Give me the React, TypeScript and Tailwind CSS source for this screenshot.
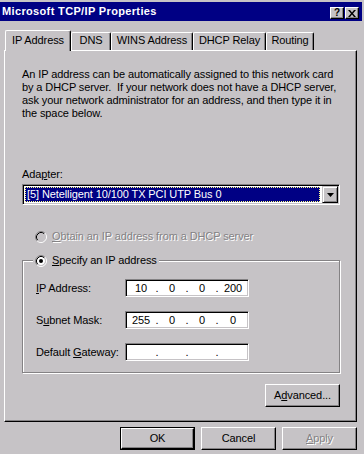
import React, { Fragment } from 'react';

function Radio({ checked, disabled }: { checked?: boolean; disabled?: boolean }) {
  return (
    <svg width="12" height="12" viewBox="0 0 12 12" className="shrink-0">
      <circle cx="6" cy="6" r="4" fill={disabled ? '#c6c3c6' : '#ffffff'} />
      <path d="M2.11 9.89A5.5 5.5 0 0 1 9.89 2.11" stroke="#848284" fill="none" />
      <path d="M9.89 2.11A5.5 5.5 0 0 1 2.11 9.89" stroke="#ffffff" fill="none" />
      <path d="M2.82 9.18A4.5 4.5 0 0 1 9.18 2.82" stroke="#000000" fill="none" />
      <path d="M9.18 2.82A4.5 4.5 0 0 1 2.82 9.18" stroke="#c6c3c6" fill="none" />
      {checked && <circle cx="6" cy="6" r="2" fill="#000000" />}
    </svg>
  );
}

function Btn({ children, isDefault }: { children: React.ReactNode; isDefault?: boolean }) {
  const inner = (
    <div className="w-full h-full flex items-center justify-center border border-t-white border-l-white border-r-black border-b-black shadow-[inset_-1px_-1px_0_#848284]">
      {children}
    </div>
  );
  return (
    <div className={isDefault ? 'w-[75px] h-[23px] border border-black' : 'w-[75px] h-[23px]'}>{inner}</div>
  );
}

function IpField({ parts }: { parts: string[] }) {
  const widths = ['w-[28px]', 'w-[26px]', 'w-[26px]', 'w-[28px]'];
  return (
    <div className="w-[124px] h-[18px] bg-white border border-t-[#848284] border-l-[#848284] border-r-white border-b-white shadow-[inset_1px_1px_0_#000,inset_-1px_-1px_0_#c6c3c6] flex items-center pl-[1px]">
      {parts.map((p, i) => (
        <Fragment key={i}>
          {i > 0 && <span className="w-[4px] text-center">.</span>}
          <span className={`${widths[i]} text-center`}>{p}</span>
        </Fragment>
      ))}
    </div>
  );
}

function Tab({ label, w, selected }: { label: string; w: string; selected?: boolean }) {
  return (
    <div
      className={`${w} ${
        selected ? 'h-[21px] -mb-px relative z-10 pt-[3px]' : 'h-[18px] pt-[1px]'
      } bg-[#c6c3c6] border-l border-t border-r border-l-white border-t-white border-r-black rounded-tl-[2px] rounded-tr-[2px] shadow-[inset_-1px_0_0_#848284] flex justify-center`}
    >
      <span className="leading-[13px]">{label}</span>
    </div>
  );
}

export default function App() {
  const disabledText = 'text-[#848284] [text-shadow:1px_1px_0_#ffffff]';
  return (
    <div className="w-[364px] h-[454px] bg-[#c6c3c6] overflow-hidden text-black text-[11px] leading-[13px] tracking-[-0.1px] font-['Liberation_Sans',Arial,sans-serif]">
      {/* Title bar */}
      <div className="mt-[2px] w-[362px] h-[19px] bg-[#000084] flex justify-between">
        <div className="pl-[2px] pt-[3px] font-bold text-white leading-[13px] tracking-[0.35px] whitespace-nowrap">
          Microsoft TCP/IP Properties
        </div>
        <div className="flex gap-[1px] pt-[5px] pr-[3px]">
          <div className="w-[14px] h-[12px] border border-t-white border-l-white border-r-black border-b-black shadow-[inset_-1px_-1px_0_#848284] bg-[#c6c3c6] flex items-center justify-center font-bold text-[10px] leading-[10px]">
            ?
          </div>
          <div className="w-[14px] h-[12px] border border-t-white border-l-white border-r-black border-b-black shadow-[inset_-1px_-1px_0_#848284] bg-[#c6c3c6] flex items-center justify-center">
            <svg width="8" height="7" viewBox="0 0 8 7">
              <path d="M0 0h2l2 2.5L6 0h2L5 3.5 8 7H6L4 4.5 2 7H0l3-3.5z" fill="#000" />
            </svg>
          </div>
        </div>
      </div>

      {/* Tabs */}
      <div className="mt-[9px] pl-[5px] h-[20px] flex items-end">
        <Tab label="IP Address" w="w-[66px]" selected />
        <Tab label="DNS" w="w-[40px]" />
        <Tab label="WINS Address" w="w-[82px]" />
        <Tab label="DHCP Relay" w="w-[73px]" />
        <Tab label="Routing" w="w-[48px]" />
      </div>

      {/* Panel */}
      <div className="ml-[4px] w-[353px] h-[372px] border border-l-white border-t-white border-r-black border-b-black shadow-[inset_-1px_-1px_0_#848284] pl-[17px] pr-[16px] pt-[17px] flex flex-col">
        <p className="whitespace-pre">
          {'An IP address can be automatically assigned to this network card\nby a DHCP server.  If your network does not have a DHCP server,\nask your network administrator for an address, and then type it in\nthe space below.'}
        </p>

        <div className="mt-[48px]">
          Ada<u>p</u>ter:
        </div>

        <div className="mt-[3px] w-[318px] h-[21px] border border-t-[#848284] border-l-[#848284] border-r-white border-b-white shadow-[inset_1px_1px_0_#000,inset_-1px_-1px_0_#c6c3c6] bg-white p-[1px] flex">
          <div className="flex-1 p-[1px] pr-[2px]">
            <div className="h-full bg-[#000084] border border-dotted border-[#ffff84] text-white pl-[1px] flex items-center whitespace-nowrap">
              [5] Netelligent 10/100 TX PCI UTP Bus 0
            </div>
          </div>
          <div className="w-[16px] h-[17px] bg-[#c6c3c6] border border-t-[#c6c3c6] border-l-[#c6c3c6] border-r-black border-b-black shadow-[inset_1px_1px_0_#fff,inset_-1px_-1px_0_#848284] flex items-center justify-center">
            <svg width="7" height="4" viewBox="0 0 7 4">
              <path d="M0 0h7L3.5 4z" fill="#000" />
            </svg>
          </div>
        </div>

        <div className="mt-[25px] ml-[13px] flex items-center gap-[5px]">
          <Radio disabled />
          <span className={disabledText}>
            <u>O</u>btain an IP address from a DHCP server
          </span>
        </div>

        <fieldset className="mt-[11px] w-[318px] border border-[#848284] shadow-[1px_1px_0_#fff,inset_1px_1px_0_#fff]">
          <legend className="ml-[10px] px-[2px] bg-[#c6c3c6] flex items-center gap-[5px] h-[13px]">
            <Radio checked />
            <span>
              <u>S</u>pecify an IP address
            </span>
          </legend>
          <div className="pt-[12px] pb-[11px] pl-[13px] flex flex-col gap-[14px]">
            <div className="flex items-center">
              <div className="w-[89px]">
                <u>I</u>P Address:
              </div>
              <IpField parts={['10', '0', '0', '200']} />
            </div>
            <div className="flex items-center">
              <div className="w-[89px]">
                S<u>u</u>bnet Mask:
              </div>
              <IpField parts={['255', '0', '0', '0']} />
            </div>
            <div className="flex items-center">
              <div className="w-[89px] whitespace-nowrap">
                Default <u>G</u>ateway:
              </div>
              <IpField parts={['', '', '', '']} />
            </div>
          </div>
        </fieldset>

        <div className="mt-[11px] flex justify-end">
          <Btn>
            A<u>d</u>vanced...
          </Btn>
        </div>
      </div>

      {/* Bottom buttons */}
      <div className="mt-[5px] pr-[7px] flex justify-end gap-[6px]">
        <Btn isDefault>OK</Btn>
        <Btn>Cancel</Btn>
        <Btn>
          <span className={disabledText}>
            <u>A</u>pply
          </span>
        </Btn>
      </div>
    </div>
  );
}
